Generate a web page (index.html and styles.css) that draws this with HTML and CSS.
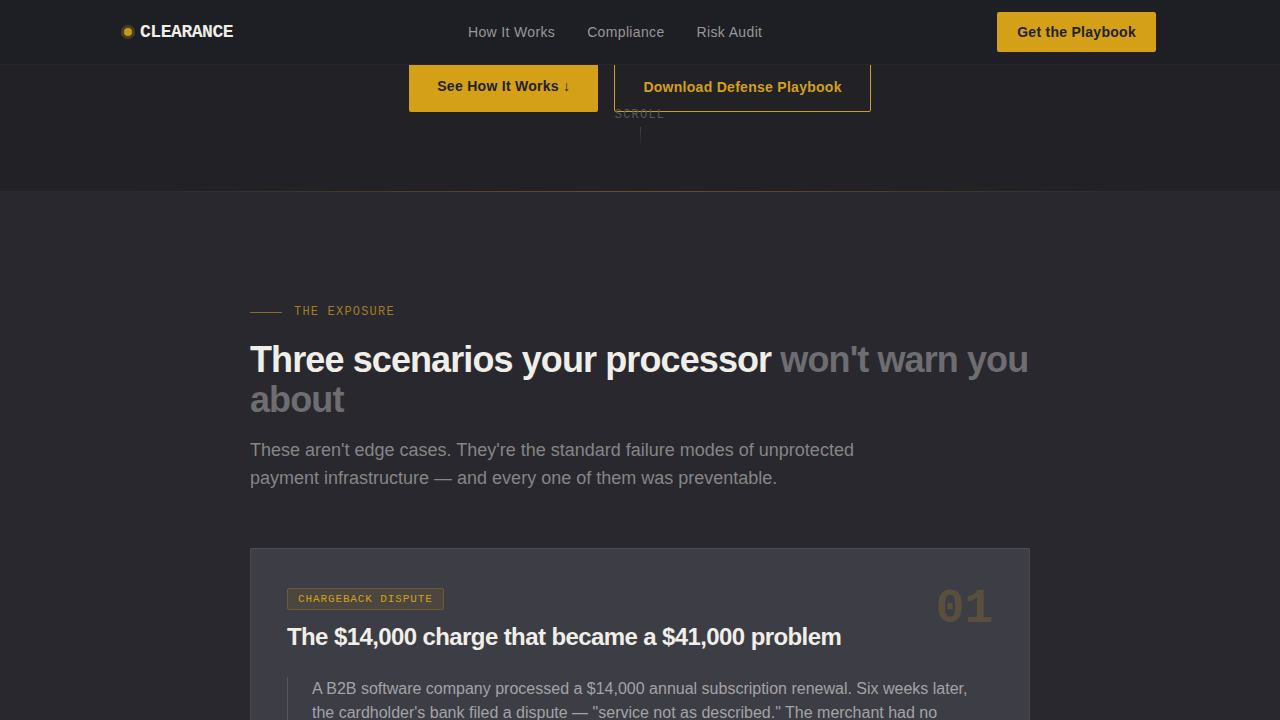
FILE: index.html
```html
<!DOCTYPE html>
<html lang="en">
<head>
  <meta charset="UTF-8" />
  <meta name="viewport" content="width=device-width, initial-scale=1.0" />
  <title>Clearance</title>
  <link rel="stylesheet" href="styles.css">
</head>
<body>
  <header class="nav">
    <div class="nav-inner">
      <a class="logo" href="#"><span class="logo-dot"></span>CLEARANCE</a>
      <nav class="nav-links">
        <a href="#how">How It Works</a>
        <a href="#compliance">Compliance</a>
        <a href="#audit">Risk Audit</a>
      </nav>
      <button class="btn btn-nav">Get the Playbook</button>
    </div>
  </header>

  <section class="hero">
    <div class="hero-actions">
      <a class="btn btn-primary" href="#how">See How It Works ↓</a>
      <a class="btn btn-outline" href="#playbook">Download Defense Playbook</a>
    </div>
    <div class="scroll-hint">
      <span>SCROLL</span>
      <span class="scroll-line"></span>
    </div>
  </section>

  <main class="exposure" id="how">
    <div class="container">
      <p class="label">THE EXPOSURE</p>
      <h2>Three scenarios your processor <span class="muted">won't warn you about</span></h2>
      <p class="lead">These aren't edge cases. They're the standard failure modes of unprotected payment infrastructure — and every one of them was preventable.</p>

      <article class="card">
        <div class="card-head">
          <div class="card-title">
            <span class="tag">CHARGEBACK DISPUTE</span>
            <h3>The $14,000 charge that became a $41,000 problem</h3>
          </div>
          <span class="card-number">01</span>
        </div>
        <p class="story">A B2B software company processed a $14,000 annual subscription renewal. Six weeks later, the cardholder's bank filed a dispute — "service not as described." The merchant had no</p>
      </article>
    </div>
  </main>
</body>
</html>
```
FILE: styles.css
```css
:root {
  --nav: #1d1f24;
  --hero: #222226;
  --bg: #29282e;
  --card: #3c3d45;
  --gold: #d4a017;
  --text: #f0eee8;
  --sans: "Liberation Sans", Arial, sans-serif;
  --mono: "Liberation Mono", "Courier New", monospace;
}
* {
  box-sizing: border-box;
  margin: 0;
  padding: 0;
}
body {
  font-family: var(--sans);
  background: var(--bg);
  color: var(--text);
  overflow-x: hidden;
}
a {
  color: inherit;
  text-decoration: none;
}

/* nav */
.nav {
  position: fixed;
  top: 0;
  left: 0;
  right: 0;
  z-index: 10;
  background: var(--nav);
  border-bottom: 1px solid #27272c;
}
.nav-inner {
  max-width: 1080px;
  margin: 0 auto;
  padding: 12px 24px;
  display: flex;
  align-items: center;
  justify-content: space-between;
}
.logo {
  display: flex;
  align-items: center;
  gap: 8px;
  font-family: var(--mono);
  font-size: 18px;
  font-weight: 700;
  letter-spacing: -0.025em;
}
.logo-dot {
  width: 8px;
  height: 8px;
  border-radius: 50%;
  background: #c49a1c;
  box-shadow: 0 0 0 3px rgba(212, 160, 23, 0.25);
}
.nav-links {
  display: flex;
  gap: 32px;
  font-size: 14px;
  letter-spacing: 0.025em;
  color: #98979a;
}

/* buttons */
.btn {
  font-family: var(--sans);
  font-size: 14px;
  font-weight: 700;
  line-height: 20px;
  letter-spacing: 0.02em;
  border: none;
  border-radius: 2px;
}
.btn-nav {
  padding: 10px 20px;
  background: var(--gold);
  color: #222226;
  cursor: pointer;
}
.btn-primary {
  padding: 14px 28px;
  background: var(--gold);
  color: #222226;
}
.btn-outline {
  padding: 14px 28px;
  border: 1px solid var(--gold);
  color: var(--gold);
}

/* hero */
.hero {
  position: relative;
  padding: 62px 24px 79px;
  background: var(--hero);
}
.hero-actions {
  display: flex;
  justify-content: center;
  gap: 16px;
}
.scroll-hint {
  position: absolute;
  left: 0;
  right: 0;
  bottom: 24px;
  display: flex;
  flex-direction: column;
  align-items: center;
  gap: 4px;
  font-family: var(--mono);
  font-size: 12px;
  line-height: 16px;
  letter-spacing: 0.1em;
  color: #58585a;
}
.scroll-line {
  width: 1px;
  height: 40px;
  background: linear-gradient(#414144, transparent 50%);
}

/* exposure */
.exposure::before {
  content: "";
  display: block;
  height: 1px;
  background: linear-gradient(90deg, transparent 10%, #65512a 50%, transparent 90%);
}
.container {
  max-width: 828px;
  margin: 0 auto;
  padding: 112px 24px;
}
.label {
  display: flex;
  align-items: center;
  gap: 12px;
  margin-bottom: 20px;
  font-family: var(--mono);
  font-size: 12px;
  line-height: 16px;
  letter-spacing: 0.1em;
  color: #a37e20;
}
.label::before {
  content: "";
  width: 32px;
  height: 1px;
  background: #8a6c22;
}
h2 {
  margin-bottom: 16px;
  font-size: 36px;
  line-height: 40px;
  letter-spacing: -0.025em;
}
.muted {
  color: #6e6d71;
}
.lead {
  max-width: 620px;
  margin-bottom: 56px;
  font-size: 18px;
  line-height: 28px;
  color: #868587;
}

/* scenario card */
.card {
  padding: 36px;
  background: var(--card);
  border: 1px solid #4b4c53;
  border-radius: 1px;
}
.card-head {
  display: flex;
  justify-content: space-between;
  align-items: flex-start;
  margin-bottom: 25px;
}
.card-title {
  padding-top: 3px;
}
.tag {
  display: inline-block;
  padding: 4px 10px;
  margin-bottom: 12px;
  font-family: var(--mono);
  font-size: 11px;
  line-height: 12px;
  letter-spacing: 0.08em;
  color: var(--gold);
  background: #4b4640;
  border: 1px solid #6d5a30;
  border-radius: 2px;
}
h3 {
  font-size: 24px;
  line-height: 30px;
  letter-spacing: -0.025em;
}
.card-number {
  font-family: var(--mono);
  font-size: 48px;
  font-weight: 700;
  line-height: 48px;
  color: #5a4f3c;
}
.story {
  padding-left: 24px;
  border-left: 1px solid #55565c;
  font-size: 16px;
  line-height: 24px;
  color: #a4a3a7;
}
```
